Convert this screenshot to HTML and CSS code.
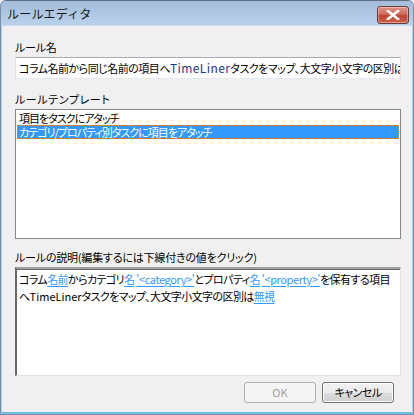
FILE: index.html
```html
<!DOCTYPE html>
<html lang="ja">
<head>
<meta charset="utf-8">
<link rel="stylesheet" href="styles.css">
</head>
<body>
<div class="window">
  <div class="titlebar">
    <span class="title">ルールエディタ</span>
    <div class="close">
      <svg width="14" height="10" viewBox="0 0 14 10"><path d="M2 1 L12 9 M12 1 L2 9" stroke="#fff" stroke-width="2.6" stroke-linecap="square"/></svg>
    </div>
  </div>
  <div class="content">
    <div class="label l-name">ルール名</div>
    <div class="textbox">コラム名前から同じ名前の項目へ<span class="tl">TimeLiner</span>タスクをマップ、大文字小文字の区別は無視</div>
    <div class="label l-tpl">ルールテンプレート</div>
    <div class="listbox">
      <div class="item">項目をタスクにアタッチ</div>
      <div class="item selected">カテゴリ/プロパティ別タスクに項目をアタッチ</div>
    </div>
    <div class="label l-desc">ルールの説明(編集するには下線付きの値をクリック)</div>
    <div class="desc">
      <div class="line">コラム<a class="lnk">名前</a>からカテゴリ<a class="lnk">名</a> <a class="lnk lat">'&lt;category&gt;'</a>とプロパティ<a class="lnk">名</a> <a class="lnk lat">'&lt;property&gt;'</a>を保有する項目</div>
      <div class="line">へ<span class="tl2">TimeLiner</span>タスクをマップ、大文字小文字の区別は<a class="lnk">無視</a></div>
    </div>
    <div class="buttons">
      <div class="btn disabled">OK</div>
      <div class="btn">キャンセル</div>
    </div>
  </div>
</div>
</body>
</html>
```
FILE: styles.css
```css
html, body {
  margin: 0;
  padding: 0;
  background: #f0f0f0;
}
body {
  font-family: "Noto Sans CJK JP", "Noto Sans", sans-serif;
  font-size: 11px;
  letter-spacing: -1px;
  color: #000;
  font-feature-settings: "palt";
}
.window {
  width: 414px;
  height: 415px;
  box-sizing: border-box;
  border: 1px solid #7b8ea3;
  border-top-color: #5e6f82;
  border-radius: 6px 6px 0 0;
  box-shadow: inset 1px 0 0 #9fd0f0, inset -1px 0 0 #9fd0f0, inset 0 -2px 0 #72bde8;
  background: #f0f0f0;
  display: flex;
  flex-direction: column;
  overflow: hidden;
}
.titlebar {
  height: 24px;
  flex: none;
  display: flex;
  align-items: center;
  justify-content: space-between;
  padding: 0 4px 0 6px;
  background: linear-gradient(#a3bcd9, #b9d1ec);
  border-bottom: 1px solid #c8d8ea;
}
.title {
  font-size: 12px;
  letter-spacing: 0.2px;
  font-feature-settings: normal;
  color: #1a1a1a;
  margin-top: 1px;
}
.close {
  width: 30px;
  height: 16px;
  margin-top: 4px;
  border: 1px solid #6b3a36;
  border-radius: 3px;
  background: linear-gradient(#e0968a 0%, #d06a5a 45%, #bd4230 55%, #cc664c 100%);
  box-shadow: inset 0 0 0 1px rgba(255,255,255,0.35);
  display: flex;
  align-items: center;
  justify-content: center;
}
.content {
  flex: 1;
  display: flex;
  flex-direction: column;
  padding: 0 12px 0 14px;
}
.label {
  height: 16px;
  line-height: 16px;
  white-space: nowrap;
  letter-spacing: -0.2px;
}
.l-name { margin-top: 13px; margin-bottom: 2px; }
.l-tpl { margin-top: 12px; margin-bottom: 2px; letter-spacing: 0.6px; }
.l-desc { margin-top: 10px; margin-bottom: 2px; }
.textbox {
  height: 22px;
  box-sizing: border-box;
  border: 1px solid #abadb3;
  border-bottom-color: #e3e9ef;
  border-right-color: #dbdfe6;
  border-left-color: #e2e3ea;
  background: #fff;
  padding: 0 3px;
  line-height: 20px;
  white-space: nowrap;
  overflow: hidden;
  letter-spacing: -0.5px;
}
.tl {
  color: #1d3a8a;
  font-size: 12px;
  letter-spacing: 0.4px;
}
.tl2 {
  letter-spacing: 0;
}
.listbox {
  height: 130px;
  box-sizing: border-box;
  border: 1px solid #828790;
  background: #fff;
  padding: 1px 1px;
}
.item {
  height: 14px;
  line-height: 14px;
  padding-left: 2px;
  white-space: nowrap;
}
.item.selected {
  background: #3399ff;
  color: #fff;
  outline: 1px dotted #d98a3a;
  outline-offset: -1px;
}
.desc {
  height: 109px;
  box-sizing: border-box;
  background: #fff;
  border-style: solid;
  border-width: 2px 1px 1px 2px;
  border-color: #a0a0a0 #e3e3e3 #e3e3e3 #696969;
  box-shadow: inset 0 1px 0 #696969;
  padding: 2px 2px;
  letter-spacing: -0.6px;
}
.line {
  height: 17px;
  line-height: 17px;
  white-space: nowrap;
}
.lnk {
  color: #3399ff;
  text-decoration: underline;
  text-underline-offset: 2px;
}
.lat {
  letter-spacing: -0.4px;
}
.buttons {
  display: flex;
  justify-content: flex-end;
  gap: 6px;
  margin-top: 6px;
  padding-right: 7px;
}
.btn {
  width: 72px;
  height: 21px;
  box-sizing: border-box;
  border: 1px solid #707070;
  border-radius: 3px;
  background: linear-gradient(#f2f2f2 0%, #ebebeb 50%, #dddddd 51%, #cfcfcf 100%);
  box-shadow: inset 0 0 0 1px #fcfcfc;
  text-align: center;
  line-height: 19px;
  letter-spacing: -0.6px;
}
.btn.disabled {
  border-color: #adb2b5;
  background: #f4f4f4;
  box-shadow: none;
  color: #a0a0a0;
  letter-spacing: 0;
}
```
